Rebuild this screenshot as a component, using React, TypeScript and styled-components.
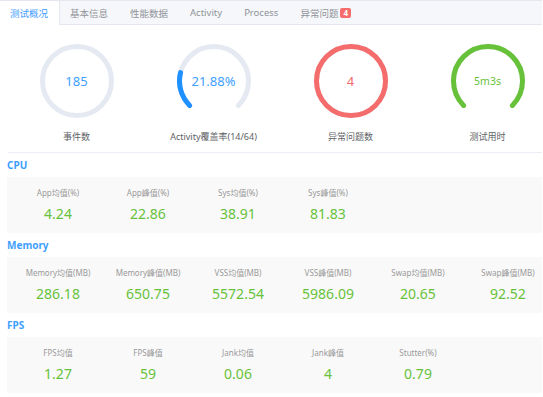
import React from 'react';
import styled, { createGlobalStyle } from 'styled-components';

const GlobalStyle = createGlobalStyle`
  html, body {
    margin: 0;
    padding: 0;
    background: #fff;
  }
  body {
    font-family: "Noto Sans", "Noto Sans CJK SC", sans-serif;
  }
`

type Tab = { label: string; badge?: number }
type Gauge = { kind: 'circle' | 'dashboard'; value: number; text: string; label: string; color: string; textColor: string; small?: boolean }
type Stat = { label: string; value: string }

const tabs: Tab[] = [
  { label: '测试概况' },
  { label: '基本信息' },
  { label: '性能数据' },
  { label: 'Activity' },
  { label: 'Process' },
  { label: '异常问题', badge: 4 },
]

const gauges: Gauge[] = [
  { kind: 'circle', value: 0, text: '185', label: '事件数', color: '#1e90ff', textColor: '#409eff' },
  { kind: 'dashboard', value: 21.88, text: '21.88%', label: 'Activity覆盖率(14/64)', color: '#1e90ff', textColor: '#409eff' },
  { kind: 'circle', value: 100, text: '4', label: '异常问题数', color: '#f56c6c', textColor: '#f56c6c' },
  { kind: 'dashboard', value: 100, text: '5m3s', label: '测试用时', color: '#67c23a', textColor: '#67c23a', small: true },
]

const sections: { title: string; stats: Stat[] }[] = [
  {
    title: 'CPU',
    stats: [
      { label: 'App均值(%)', value: '4.24' },
      { label: 'App峰值(%)', value: '22.86' },
      { label: 'Sys均值(%)', value: '38.91' },
      { label: 'Sys峰值(%)', value: '81.83' },
    ],
  },
  {
    title: 'Memory',
    stats: [
      { label: 'Memory均值(MB)', value: '286.18' },
      { label: 'Memory峰值(MB)', value: '650.75' },
      { label: 'VSS均值(MB)', value: '5572.54' },
      { label: 'VSS峰值(MB)', value: '5986.09' },
      { label: 'Swap均值(MB)', value: '20.65' },
      { label: 'Swap峰值(MB)', value: '92.52' },
    ],
  },
  {
    title: 'FPS',
    stats: [
      { label: 'FPS均值', value: '1.27' },
      { label: 'FPS峰值', value: '59' },
      { label: 'Jank均值', value: '0.06' },
      { label: 'Jank峰值', value: '4' },
      { label: 'Stutter(%)', value: '0.79' },
    ],
  },
]

const SIZE = 74
const STROKE = 5
const R = (SIZE - STROKE) / 2
const C = SIZE / 2

// angle in degrees, clockwise from 12 o'clock
function point(deg: number) {
  const rad = (deg * Math.PI) / 180
  return `${(C + R * Math.sin(rad)).toFixed(2)} ${(C - R * Math.cos(rad)).toFixed(2)}`
}

function arc(start: number, sweep: number) {
  const large = sweep > 180 ? 1 : 0
  return `M ${point(start)} A ${R} ${R} 0 ${large} 1 ${point(start + sweep)}`
}

function GaugeRing({ g }: { g: Gauge }) {
  return (
    <svg width={SIZE} height={SIZE} viewBox={`0 0 ${SIZE} ${SIZE}`}>
      {g.kind === 'circle' ? (
        <>
          <circle cx={C} cy={C} r={R} fill="none" stroke="#e5e9f2" strokeWidth={STROKE} />
          {g.value > 0 && (
            <circle cx={C} cy={C} r={R} fill="none" stroke={g.color} strokeWidth={STROKE} />
          )}
        </>
      ) : (
        <>
          <path d={arc(225, 270)} fill="none" stroke="#e5e9f2" strokeWidth={STROKE} strokeLinecap="round" />
          {g.value > 0 && (
            <path d={arc(225, (270 * g.value) / 100)} fill="none" stroke={g.color} strokeWidth={STROKE} strokeLinecap="round" />
          )}
        </>
      )}
    </svg>
  )
}

export default function App() {
  return (
    <Page>
      <GlobalStyle />
      <TabBar>
        {tabs.map((t, i) => (
          <TabItem key={t.label} active={i === 0}>
            {t.label}
            {t.badge !== undefined && <Badge>{t.badge}</Badge>}
          </TabItem>
        ))}
      </TabBar>
      <Content>
        <GaugeRow>
          {gauges.map(g => (
            <GaugeCol key={g.label}>
              <Ring>
                <GaugeRing g={g} />
                <RingText color={g.textColor} small={g.small}>{g.text}</RingText>
              </Ring>
              <GaugeLabel>{g.label}</GaugeLabel>
            </GaugeCol>
          ))}
        </GaugeRow>
        {sections.map(s => (
          <Section key={s.title}>
            <SectionTitle>{s.title}</SectionTitle>
            <StatBox>
              {s.stats.map(st => (
                <StatCell key={st.label}>
                  <StatLabel>{st.label}</StatLabel>
                  <StatValue>{st.value}</StatValue>
                </StatCell>
              ))}
            </StatBox>
          </Section>
        ))}
      </Content>
    </Page>
  )
}

const Page = styled.div`
  width: 542px;
  overflow: hidden;
`

const TabBar = styled.div`
  display: flex;
  height: 23px;
  background: #f5f7fa;
  border-top: 1px solid #e4e7ed;
  border-bottom: 1px solid #e4e7ed;
`

const TabItem = styled.div<{ active?: boolean }>`
  display: flex;
  align-items: center;
  padding: 0 11px 0 10px;
  font-size: 9.5px;
  color: ${p => (p.active ? '#409eff' : '#909399')};
  background: ${p => (p.active ? '#fff' : 'transparent')};
  border-right: 1px solid ${p => (p.active ? '#e4e7ed' : 'transparent')};
  margin-bottom: ${p => (p.active ? '-1px' : '0')};
  white-space: nowrap;
`

const Badge = styled.span`
  display: inline-flex;
  align-items: center;
  justify-content: center;
  width: 11px;
  height: 10px;
  margin-left: 2px;
  border-radius: 2px;
  background: #f56c6c;
  color: #fff;
  font-size: 8px;
  font-weight: bold;
  line-height: 10px;
`

const Content = styled.div`
  padding-left: 7px;
`

const GaugeRow = styled.div`
  display: grid;
  grid-template-columns: repeat(4, 137px);
  margin-left: 1px;
  padding: 19px 0 9px;
  border-bottom: 1px solid #ebeef5;
  width: 534px;
`

const GaugeCol = styled.div`
  display: flex;
  flex-direction: column;
  align-items: center;
`

const Ring = styled.div`
  position: relative;
  width: ${SIZE}px;
  height: ${SIZE}px;
  svg {
    display: block;
  }
`

const RingText = styled.div<{ color: string; small?: boolean }>`
  position: absolute;
  inset: 0;
  display: flex;
  align-items: center;
  justify-content: center;
  color: ${p => p.color};
  font-size: ${p => (p.small ? '10.5px' : '13px')};
`

const GaugeLabel = styled.div`
  margin-top: 13px;
  font-size: 9px;
  line-height: 12px;
  color: #606266;
  white-space: nowrap;
`

const Section = styled.div`
  display: flex;
  flex-direction: column;
`

const SectionTitle = styled.div`
  height: 24px;
  line-height: 24px;
  font-size: 10px;
  font-weight: bold;
  color: #409eff;
`

const StatBox = styled.div`
  display: grid;
  grid-template-columns: repeat(6, 90px);
  width: 535px;
  height: 56px;
  box-sizing: border-box;
  padding: 10px 0 9px 6px;
  background: #f9f9f9;
  overflow: hidden;
`

const StatCell = styled.div`
  display: flex;
  flex-direction: column;
  align-items: center;
`

const StatLabel = styled.div`
  font-size: 8px;
  line-height: 12px;
  color: #999;
  white-space: nowrap;
`

const StatValue = styled.div`
  margin-top: 5px;
  font-size: 14px;
  line-height: 20px;
  color: #67c23a;
`
